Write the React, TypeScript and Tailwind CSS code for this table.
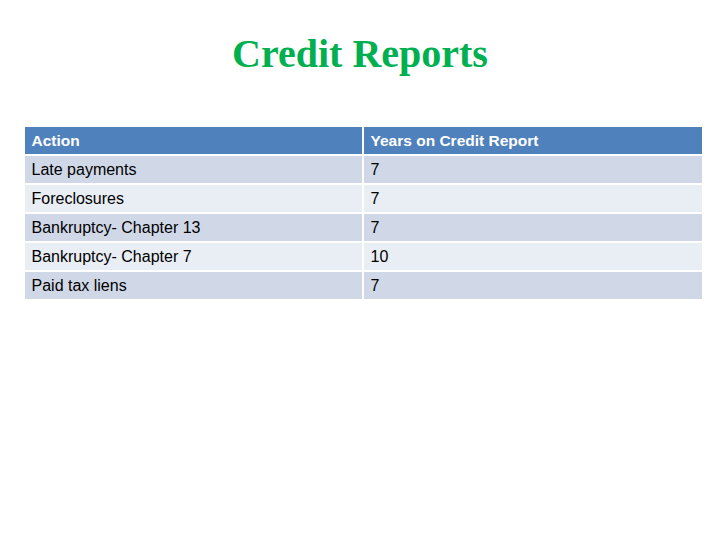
const rows: [string, string][] = [
  ["Late payments", "7"],
  ["Foreclosures", "7"],
  ["Bankruptcy- Chapter 13", "7"],
  ["Bankruptcy- Chapter 7", "10"],
  ["Paid tax liens", "7"],
];

export default function App() {
  return (
    <main className="w-[720px] h-[540px] bg-white flex flex-col items-center pt-[24px]">
      <h1 className="text-[40px] leading-[60px] font-bold text-[#00b050] [font-family:'Liberation_Serif',serif]">
        Credit Reports
      </h1>
      <div className="w-[677px] ml-[6px] mt-[43px] flex flex-col gap-[2px] text-[16px] [font-family:'Liberation_Sans',sans-serif]">
        <div className="flex gap-[2px] h-[27px] text-white font-bold text-[15.5px]">
          <div className="w-[337px] bg-[#4f81bd] px-[7px] pt-[1px] flex items-center">Action</div>
          <div className="flex-1 bg-[#4f81bd] px-[7px] pt-[1px] flex items-center">Years on Credit Report</div>
        </div>
        {rows.map(([a, y], i) => (
          <div key={a} className="flex gap-[2px] h-[27px] text-black">
            <div className={`w-[337px] px-[7px] pt-[1px] flex items-center ${i % 2 === 0 ? "bg-[#d0d8e8]" : "bg-[#e9edf4]"}`}>{a}</div>
            <div className={`flex-1 px-[7px] pt-[1px] flex items-center ${i % 2 === 0 ? "bg-[#d0d8e8]" : "bg-[#e9edf4]"}`}>{y}</div>
          </div>
        ))}
      </div>
    </main>
  );
}
